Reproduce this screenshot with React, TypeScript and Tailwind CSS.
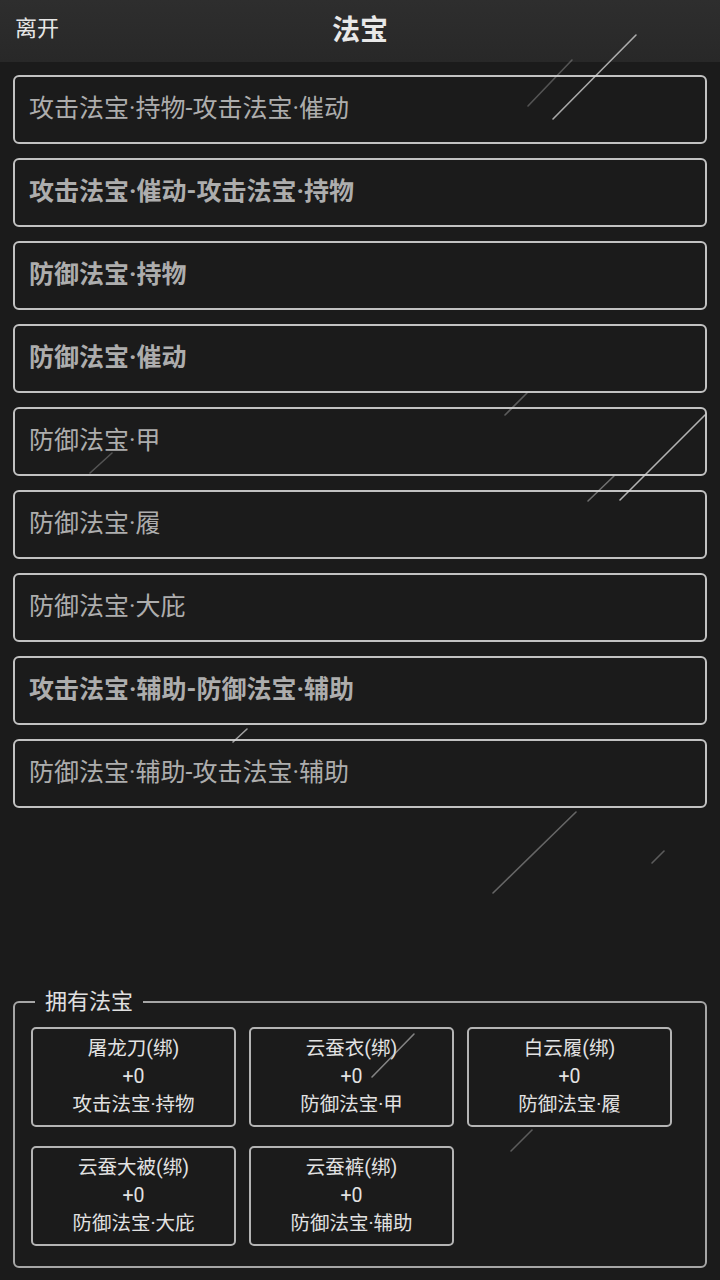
const font = { fontFamily: 'Roboto, "Noto Sans CJK SC", sans-serif' };

const skills = [
  { label: "攻击法宝·持物-攻击法宝·催动", bold: false },
  { label: "攻击法宝·催动-攻击法宝·持物", bold: true },
  { label: "防御法宝·持物", bold: true },
  { label: "防御法宝·催动", bold: true },
  { label: "防御法宝·甲", bold: false },
  { label: "防御法宝·履", bold: false },
  { label: "防御法宝·大庇", bold: false },
  { label: "攻击法宝·辅助-防御法宝·辅助", bold: true },
  { label: "防御法宝·辅助-攻击法宝·辅助", bold: false },
];

const owned = [
  { name: "屠龙刀(绑)", level: "+0", kind: "攻击法宝·持物" },
  { name: "云蚕衣(绑)", level: "+0", kind: "防御法宝·甲" },
  { name: "白云履(绑)", level: "+0", kind: "防御法宝·履" },
  { name: "云蚕大被(绑)", level: "+0", kind: "防御法宝·大庇" },
  { name: "云蚕裤(绑)", level: "+0", kind: "防御法宝·辅助" },
];

// meteor streaks drawn over the page: [x1, y1, x2, y2, opacity]
const streaks: [number, number, number, number, number][] = [
  [553, 119, 636, 35, 0.75],
  [528, 106, 572, 60, 0.3],
  [505, 415, 527, 393, 0.35],
  [620, 500, 705, 415, 0.8],
  [588, 501, 614, 476, 0.45],
  [90, 473, 112, 453, 0.3],
  [233, 742, 247, 729, 0.7],
  [493, 893, 576, 812, 0.4],
  [652, 863, 664, 851, 0.35],
  [372, 1077, 414, 1034, 0.55],
  [511, 1151, 532, 1130, 0.35],
];

function Streaks() {
  return (
    <svg
      className="pointer-events-none absolute inset-0"
      width={720}
      height={1280}
      viewBox="0 0 720 1280"
    >
      {streaks.map(([x1, y1, x2, y2, o], i) => (
        <line
          key={i}
          x1={x1}
          y1={y1}
          x2={x2}
          y2={y2}
          stroke="#d8d8d8"
          strokeOpacity={o}
          strokeWidth={1.6}
          strokeLinecap="round"
        />
      ))}
    </svg>
  );
}

export default function App() {
  return (
    <div
      className="relative flex h-[1280px] w-[720px] flex-col overflow-hidden bg-[#1b1b1b]"
      style={font}
    >
      <header className="relative flex h-[62px] shrink-0 items-center justify-center bg-gradient-to-b from-[#2e2e2e] to-[#282828]">
        <span className="absolute left-[15px] top-[13px] text-[22px] leading-[32px] text-[#e6e6e6]">
          离开
        </span>
        <h1 className="text-[28px] font-bold leading-[36px] text-[#e8e8e8]">法宝</h1>
      </header>

      <div className="flex flex-1 flex-col gap-[14px] px-[13px] pt-[13px]">
        {skills.map((s) => (
          <div
            key={s.label}
            className="flex h-[69px] items-center rounded-[6px] border-2 border-[#c2c2c2] px-[14px] pb-[1px]"
          >
            <span
              className={
                s.bold
                  ? "text-[25px] font-bold leading-[32px] text-[#adadad]"
                  : "text-[25px] leading-[32px] text-[#adadad]"
              }
            >
              {s.label}
            </span>
          </div>
        ))}
      </div>

      <fieldset className="mx-[13px] mb-[12px] rounded-[6px] border-2 border-[#a6a6a6] px-[16px] pb-[20px] pt-[10px]">
        <legend className="ml-[4px] px-[10px] text-[22px] leading-[30px] text-[#e0e0e0]">
          拥有法宝
        </legend>
        <div className="flex flex-wrap gap-x-[13px] gap-y-[19px]">
          {owned.map((o) => (
            <div
              key={o.name}
              className="flex h-[100px] w-[205px] flex-col items-center justify-center rounded-[5px] border-2 border-[#b4b4b4] text-[19.5px] leading-[28px] text-[#e2e2e2]"
            >
              <span>{o.name}</span>
              <span>{o.level}</span>
              <span>{o.kind}</span>
            </div>
          ))}
        </div>
      </fieldset>

      <Streaks />
    </div>
  );
}
